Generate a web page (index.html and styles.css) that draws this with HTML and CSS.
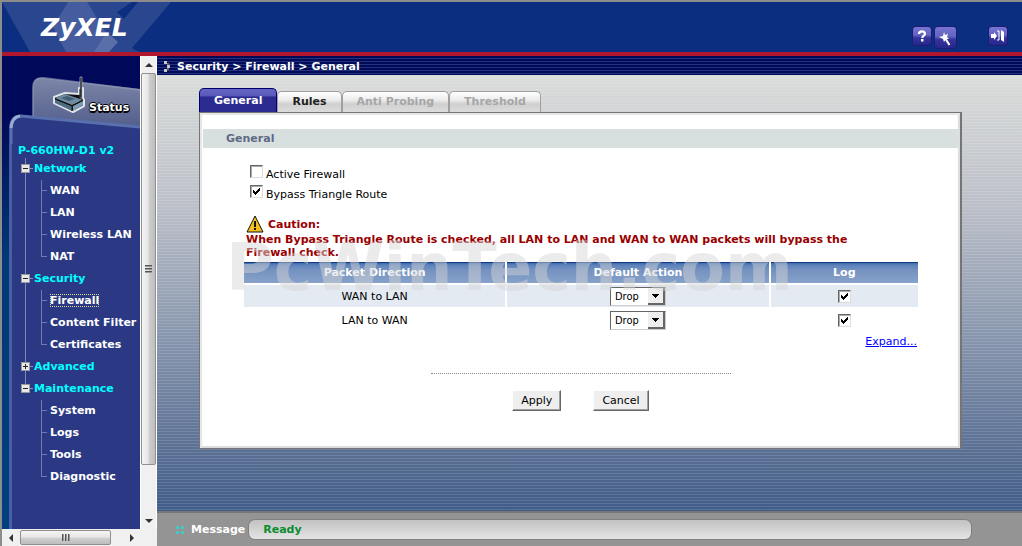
FILE: index.html
```html
<!DOCTYPE html>
<html lang="en">
<head>
  <meta charset="UTF-8">
  <meta name="viewport" content="width=device-width, initial-scale=1.0">
  <title>ZyXEL P-660HW-D1 v2</title>
  <link rel="stylesheet" href="styles.css">
</head>
<body>
  <!-- Header -->
  <header>
    <svg class="header-art" width="180" height="50" viewBox="0 0 180 50" aria-hidden="true">
      <path d="M0 0H130L115 10L122 17L136 0H169L130 46L137 50H28Z" fill="#2a468f" />
      <path d="M66 0H85L106 34L92 50H64L51 25Z" fill="#455c9f" />
      <path d="M105 30L116 40L107 50H92Z" fill="#5a6faa" />
    </svg>
    <a class="logo" href="#">ZyXEL</a>
    <div class="header-tools">
      <button class="tool" aria-label="Help">
        <svg width="18" height="18" viewBox="0 0 18 18"><path d="M6 7C6 3.600 12 3.600 12 6.800C12 8.800 9.300 8.700 9.300 11" fill="none" stroke="#fff" stroke-width="2.200" /><path d="M8 12H10.500V14.500H8Z" fill="#fff" /></svg>
      </button>
      <button class="tool tool-large" aria-label="Wizard">
        <svg width="21" height="21" viewBox="0 0 21 21"><path d="M9 5L10 8L13 7L12 10L14 12L11 12L9 15L8 12L4 10L8 9Z" fill="#fff" /><path d="M10 11L14.500 18" stroke="#fff" stroke-width="2" /></svg>
      </button>
      <button class="tool tool-exit" aria-label="Logout">
        <svg width="18" height="18" viewBox="0 0 18 18"><path d="M2 7H5V5L8 9L5 13V11H2Z" fill="#fff" /><path d="M8 4H10V13H8" fill="none" stroke="#fff" /><path d="M12 3L15 5V15L12 13Z" fill="#fff" /></svg>
      </button>
    </div>
  </header>

  <div class="frames">
    <!-- Sidebar -->
    <aside>
      <div class="side-row">
        <div class="side-content">
          <div class="side-top">
            <svg width="138" height="88" viewBox="0 0 138 88" aria-hidden="true">
              <defs>
                <linearGradient id="tab" x1="0" y1="0" x2="0" y2="1">
                  <stop offset="0" stop-color="#7c86a8" />
                  <stop offset="1" stop-color="#505b8a" />
                </linearGradient>
              </defs>
              <path d="M31 62V31Q31 20 42 22L138 33V75H31Z" fill="url(#tab)" />
              <path d="M31 60V32Q31 21 42 22L138 34" fill="none" stroke="#8f98b2" stroke-width="2" opacity=".6" />
              <path d="M7 88V69Q9 59 18 59L138 70V88Z" fill="#2b3984" />
              <path d="M9 88V70Q10 60 19 60L138 71" fill="none" stroke="#5870ad" stroke-width="3" />
              <path d="M9 72Q10 61 18 60" fill="none" stroke="#9aadd2" stroke-width="3" />
              <!-- router -->
              <path d="M52 41L63 37L77 38V32H81V42L82 44V50L71 56L52 47Z" fill="#111" stroke="#dfe5ea" stroke-width="2" stroke-linejoin="round" />
              <path d="M78 42V21H80V42Z" fill="#111" stroke="#b8c0cc" stroke-width=".7" />
              <path d="M53 42L63 38L81 44L70 49Z" fill="#6e8ba0" />
              <path d="M53 43L70 50V55L53 47Z" fill="#4f6d83" />
              <path d="M71 50L81 45V49L71 55Z" fill="#7d9db2" />
              <path d="M59 42L65 40L73 43L67 45Z" fill="#435e72" />
              <path d="M53 43L70 50L81 44M70 50V55M78 42V33" fill="none" stroke="#111" />
            </svg>
            <a class="status-link" href="#">Status</a>
          </div>
          <nav>
            <div class="model">P-660HW-D1 v2</div>
            <ul class="tree">
              <li class="group">
                <button class="toggle" aria-label="Collapse Network"></button><a href="#">Network</a>
                <ul>
                  <li><a href="#">WAN</a></li>
                  <li><a href="#">LAN</a></li>
                  <li><a href="#">Wireless LAN</a></li>
                  <li><a href="#">NAT</a></li>
                </ul>
              </li>
              <li class="group">
                <button class="toggle" aria-label="Collapse Security"></button><a href="#">Security</a>
                <ul>
                  <li><a class="current" href="#">Firewall</a></li>
                  <li><a href="#">Content Filter</a></li>
                  <li><a href="#">Certificates</a></li>
                </ul>
              </li>
              <li class="group">
                <button class="toggle closed" aria-label="Expand Advanced"></button><a href="#">Advanced</a>
              </li>
              <li class="group">
                <button class="toggle" aria-label="Collapse Maintenance"></button><a href="#">Maintenance</a>
                <ul>
                  <li><a href="#">System</a></li>
                  <li><a href="#">Logs</a></li>
                  <li><a href="#">Tools</a></li>
                  <li><a href="#">Diagnostic</a></li>
                </ul>
              </li>
            </ul>
          </nav>
        </div>
        <div class="scroll-v">
          <span class="arrow up"></span>
          <span class="thumb"><i></i></span>
          <span class="arrow down"></span>
        </div>
      </div>
      <div class="scroll-h">
        <span class="arrow left"></span>
        <span class="thumb"><i></i></span>
        <span class="arrow right"></span>
      </div>
    </aside>

    <!-- Main frame -->
    <div class="main">
      <div class="breadcrumb">
        <svg width="7" height="11" viewBox="0 0 7 11" aria-hidden="true"><path d="M0 0H3V3H0ZM3 4H6V7H3ZM0 8H3V11H0Z" fill="#c8c8c8" /><path d="M3 2H5V4H3ZM3 7H5V9H3Z" fill="#667" /></svg>
        Security &gt; Firewall &gt; General
      </div>

      <main>
        <div class="tabs">
          <button class="tab active">General</button>
          <button class="tab">Rules</button>
          <button class="tab" disabled>Anti Probing</button>
          <button class="tab" disabled>Threshold</button>
        </div>

        <form class="panel" onsubmit="return false;">
          <h2>General</h2>

          <div class="fields">
            <div class="check-row">
              <input type="checkbox" id="active">
              <label for="active">Active Firewall</label>
            </div>
            <div class="check-row">
              <input type="checkbox" id="bypass" checked>
              <label for="bypass">Bypass Triangle Route</label>
            </div>

            <div class="caution">
              <div class="caution-title">
                <svg width="18" height="18" viewBox="0 0 18 18" aria-hidden="true"><path d="M9 1L17 17H1Z" fill="#f1c01c" stroke="#111" stroke-linejoin="round" /><path d="M8 6H10V12H8ZM8 13H10V15H8Z" fill="#111" /></svg>
                Caution:
              </div>
              <p>When Bypass Triangle Route is checked, all LAN to LAN and WAN to WAN packets will bypass the Firewall check.</p>
            </div>

            <div class="rules">
              <table>
                <thead>
                  <tr><th class="wide">Packet Direction</th><th class="wide">Default Action</th><th>Log</th></tr>
                </thead>
                <tbody>
                  <tr>
                    <td>WAN to LAN</td>
                    <td><select aria-label="WAN to LAN action"><option>Drop</option><option>Permit</option></select></td>
                    <td><input type="checkbox" aria-label="Log WAN to LAN" checked></td>
                  </tr>
                  <tr>
                    <td>LAN to WAN</td>
                    <td><select aria-label="LAN to WAN action"><option>Drop</option><option>Permit</option></select></td>
                    <td><input type="checkbox" aria-label="Log LAN to WAN" checked></td>
                  </tr>
                </tbody>
              </table>
              <div class="watermark">PcWinTech.com</div>
            </div>
            <a class="expand" href="#">Expand...</a>
          </div>

          <hr>
          <div class="buttons">
            <button type="submit">Apply</button>
            <button type="reset">Cancel</button>
          </div>
        </form>
      </main>

      <!-- Message bar -->
      <footer>
        <svg width="9" height="8" viewBox="0 0 9 8" aria-hidden="true"><path d="M0 0H3V3H0ZM5 0H8V3H5ZM0 5H3V8H0ZM5 5H8V8H5Z" fill="#45c8c8" /></svg>
        <span>Message</span>
        <output>Ready</output>
      </footer>
    </div>
  </div>
</body>
</html>
```
FILE: styles.css
```css
/* Global Styles */
* {
  box-sizing: border-box;
}

body {
  margin: 0;
  min-height: 100vh;
  display: flex;
  flex-direction: column;
  border-left: 2px solid #8c8c8c;
  font-family: Verdana, "DejaVu Sans", sans-serif;
  font-size: 11px;
  color: #000;
}

button,
select,
input {
  margin: 0;
  font-family: inherit;
  font-size: inherit;
}

ul {
  margin: 0;
  padding: 0;
  list-style: none;
}

/* Header */
header {
  position: relative;
  display: flex;
  align-items: flex-start;
  height: 56px;
  background: #0b2e80;
  border-top: 2px solid #8c8c8c;
  border-bottom: 4px solid #b0162e;
}

.header-art {
  position: absolute;
  left: 0;
  top: 0;
}

.logo {
  position: relative;
  padding: 11px 0 0 39px;
  color: #fff;
  font-size: 25px;
  line-height: 30px;
  font-weight: bold;
  font-style: italic;
  text-decoration: none;
}

.header-tools {
  display: flex;
  margin-left: auto;
  padding: 25px 15px 0 0;
  gap: 4px;
}

.tool {
  width: 18px;
  height: 18px;
  padding: 0;
  border: 0;
  border-radius: 3px;
  background: linear-gradient(#7676d2, #6363c0 45%, #34349c 60%, #26268a);
  box-shadow: 0 0 0 1px #1c1c78;
}

.tool svg {
  display: block;
}

.tool-large {
  width: 21px;
  height: 21px;
}

.tool-exit {
  margin-left: 29px;
}

/* Frames */
.frames {
  flex: 1;
  display: flex;
}

aside {
  width: 155px;
  flex-shrink: 0;
  display: flex;
  flex-direction: column;
  background: #f0f0f0;
}

.side-row {
  flex: 1;
  display: flex;
}

.side-content {
  flex: 1;
  min-width: 0;
  display: flex;
  flex-direction: column;
  overflow: hidden;
  background: linear-gradient(#00085a, #00085a 60px, #003878 200px, #003f80);
}

/* Status tab */
.side-top {
  position: relative;
  height: 88px;
}

.side-top svg {
  display: block;
}

.status-link {
  position: absolute;
  left: 87px;
  top: 44px;
  color: #fff;
  font-size: 11px;
  line-height: 15px;
  font-weight: bold;
  text-decoration: none;
  text-shadow: 1px 1px #000, -1px 0 #000, 1px 0 #000, 0 -1px #000, 0 2px #000;
}

/* Menu tree */
nav {
  flex: 1;
  margin-left: 7px;
  padding-left: 9px;
  border-left: 3px solid #4a5fa2;
  background: #2b3984;
  font-weight: bold;
  white-space: nowrap;
}

nav a {
  color: #fff;
  text-decoration: none;
}

.model {
  margin-left: -3px;
  line-height: 14px;
  color: #0ff;
}

.group {
  position: relative;
  padding-left: 13px;
  line-height: 22px;
}

.group > a {
  color: #0ff;
}

/* vertical line joining the groups */
.group::before {
  content: "";
  position: absolute;
  left: 4px;
  top: 0;
  bottom: 0;
  border-left: 1px solid #7c87b8;
}

.group:last-child::before {
  bottom: auto;
  height: 11px;
}

.group::after {
  content: "";
  position: absolute;
  left: 9px;
  top: 10px;
  width: 3px;
  border-top: 1px solid #8a94bf;
}

.toggle {
  position: absolute;
  z-index: 1;
  left: 0;
  top: 6px;
  width: 9px;
  height: 9px;
  padding: 0;
  border: 1px solid #999;
  background: linear-gradient(#222, #222) center / 5px 1px no-repeat, #e8e8e8;
}

.toggle.closed {
  background: linear-gradient(#222, #222) center / 5px 1px no-repeat, linear-gradient(#222, #222) center / 1px 5px no-repeat, #e8e8e8;
}

.group li {
  position: relative;
  padding-left: 16px;
}

.group li::before {
  content: "";
  position: absolute;
  left: 7px;
  top: 0;
  bottom: 0;
  border-left: 1px solid #6f7bb0;
}

.group li:last-child::before {
  bottom: auto;
  height: 11px;
}

.group li::after {
  content: "";
  position: absolute;
  left: 7px;
  top: 10px;
  width: 6px;
  border-top: 1px solid #6f7bb0;
}

nav .current {
  outline: 1px dotted #e0d890;
  outline-offset: -1px;
}

/* Scroll bars */
.scroll-v {
  width: 17px;
  display: flex;
  flex-direction: column;
  align-items: center;
  background: #f0f0f0;
  border-left: 1px solid #fff;
  border-right: 1px solid #fff;
}

.scroll-h {
  height: 17px;
  display: flex;
  align-items: center;
  background: #f0f0f0;
}

.arrow {
  width: 17px;
  height: 17px;
  flex-shrink: 0;
  display: flex;
  align-items: center;
  justify-content: center;
}

.arrow::before {
  content: "";
  border: 4px solid transparent;
}

.up::before {
  border-top-width: 0;
  border-bottom-color: #333;
}

.down::before {
  border-bottom-width: 0;
  border-top-color: #333;
}

.left::before {
  border-left-width: 0;
  border-right-color: #333;
}

.right::before {
  border-right-width: 0;
  border-left-color: #333;
}

.thumb {
  display: flex;
  align-items: center;
  justify-content: center;
  border: 1px solid #8f8f8f;
  border-radius: 2px;
}

.scroll-v .thumb {
  width: 15px;
  flex: 1;
  margin-bottom: 47px;
  background: linear-gradient(to right, #f5f5f5, #e6e6e6 48%, #cfcfcf 55%, #bdbdbd);
}

.scroll-v i {
  width: 7px;
  height: 8px;
  background: repeating-linear-gradient(#555 0 1px, #999 1px 2px, transparent 2px 3px);
}

.scroll-h .thumb {
  height: 15px;
  width: 91px;
  margin: 0 12px 0 1px;
  background: linear-gradient(#f5f5f5, #e6e6e6 48%, #cfcfcf 55%, #bdbdbd);
}

.scroll-h i {
  width: 8px;
  height: 7px;
  background: repeating-linear-gradient(to right, #555 0 1px, #999 1px 2px, transparent 2px 3px);
}

/* Main frame */
.main {
  flex: 1;
  min-width: 0;
  display: flex;
  flex-direction: column;
}

.breadcrumb {
  height: 19px;
  display: flex;
  align-items: center;
  gap: 6px;
  padding: 2px 0 0 7px;
  color: #fff;
  font-weight: bold;
  background: repeating-linear-gradient(#000a58 0 2px, #22347c 2px 3px);
}

main {
  flex: 1;
  padding: 13px 60px 0 42px;
  background: repeating-linear-gradient(transparent 0 2px, rgba(255, 255, 255, 0.13) 2px 3px), linear-gradient(#dadcda, #bbbfc8 30%, #8493ab 62%, #5c7195 85%, #405b87);
}

/* Tabs */
.tabs {
  display: flex;
  align-items: flex-end;
  height: 24px;
}

.tab {
  height: 21px;
  padding: 0 14px 1px;
  border: 1px solid #a0a0a0;
  border-width: 1px 1px 0;
  border-radius: 5px 5px 0 0;
  background: linear-gradient(#fff, #ececec 40%, #d0d0d0 60%, #dcdcdc);
  color: #222;
  font-weight: bold;
}

.tab:disabled {
  color: #a6a6a6;
}

.tab.active {
  height: 24px;
  color: #fff;
  border-color: #00006c;
  background: linear-gradient(#6666c4, #5a5ab8 28%, #2b2b92 36%, #2b2b92);
}

/* Panel */
.panel {
  min-height: 337px;
  padding: 16px 2px 36px 3px;
  background: #fff;
  border: 1px solid #757575;
  border-right-width: 2px;
  box-shadow: inset 2px 2px 1px #e6e6e6, inset -2px -2px 1px #dcdcdc;
}

.panel h2 {
  margin: 0;
  padding: 1px 0 0 23px;
  font-size: 11px;
  line-height: 18px;
  color: #5f6a85;
  background: #d7e0de;
}

.fields {
  padding: 17px 40px 0 41px;
  display: flex;
  flex-direction: column;
}

input[type="checkbox"] {
  appearance: none;
  width: 13px;
  height: 13px;
  border: 1px solid;
  border-color: #666 #ddd #ddd #666;
  background: #fff;
  box-shadow: inset 1px 1px #aaa;
}

input[type="checkbox"]:checked {
  background: #fff url("data:image/svg+xml,%3Csvg xmlns='http://www.w3.org/2000/svg' width='7' height='7' shape-rendering='crispEdges'%3E%3Cpath d='M0 2h1v1h1v1h1v-1h1v-1h1v-1h1v-1h1v3h-1v1h-1v1h-1v1h-1v1h-1v-1h-1v-1h-1z'/%3E%3C/svg%3E") center / 7px 7px no-repeat;
}

.check-row {
  display: flex;
  align-items: flex-start;
  height: 20px;
  gap: 3px;
  padding-left: 6px;
}

.check-row label {
  padding-top: 3px;
  line-height: 14px;
}

.caution {
  padding: 10px 32px 0 2px;
  color: #900;
  font-weight: bold;
}

.caution-title {
  display: flex;
  align-items: center;
  gap: 4px;
}

.caution p {
  margin: 0;
  line-height: 13px;
}

/* Rules table */
.rules {
  position: relative;
  margin: 1px -2px 0;
}

table {
  width: 100%;
  table-layout: fixed;
  border-spacing: 2px;
}

th {
  height: 21px;
  padding: 0;
  color: #fff;
  background: linear-gradient(#123a80 0 1px, #3d68ac 1px, #5c82bb 3px, #7592c0 8px, #86a2ca);
}

.wide {
  width: 39%;
}

td {
  height: 22px;
  padding: 0;
  text-align: center;
}

td input,
td select {
  vertical-align: middle;
}

tbody tr:first-child td {
  background: #e3eaf2;
}

select {
  appearance: none;
  width: 56px;
  height: 19px;
  padding: 0 4px;
  border: 1px solid;
  border-color: #666 #ccc #ccc #666;
  border-radius: 0;
  color: #000;
  font-family: Tahoma, "DejaVu Sans Condensed", "DejaVu Sans", sans-serif;
  background: #fff url("data:image/svg+xml,%3Csvg xmlns='http://www.w3.org/2000/svg' width='17' height='17' shape-rendering='crispEdges'%3E%3Cpath fill='%23eee' d='M0 0h17v17H0z'/%3E%3Cpath fill='%23666' d='M15 0h2v17H0v-2h15z'/%3E%3Cpath d='M4 6h7v1h-1v1H9v1H8v1H7V9H6V8H5V7H4z'/%3E%3C/svg%3E") right top no-repeat;
}

.watermark {
  position: absolute;
  left: -16px;
  top: -29px;
  color: rgba(213, 213, 213, 0.48);
  font-size: 65px;
  line-height: 74px;
  font-weight: bold;
  pointer-events: none;
}

.expand {
  align-self: flex-end;
  line-height: 17px;
  margin-right: 1px;
  color: #00f;
}

/* Form buttons */
hr {
  width: 300px;
  margin: 23px auto 16px;
  border: 0;
  border-top: 1px dotted #888;
}

.buttons {
  display: flex;
  justify-content: center;
  gap: 32px;
}

.buttons button {
  height: 21px;
  padding: 0 8px;
  border: 1px solid;
  border-color: #fff #666 #666 #fff;
  background: #eee;
  box-shadow: inset -1px -1px #a0a0a0;
}

/* Message bar */
footer {
  display: flex;
  align-items: center;
  height: 35px;
  padding: 0 51px 0 19px;
  border-top: 2px solid #777;
  background: #949494;
  color: #fff;
  font-weight: bold;
}

footer span {
  margin: 0 4px 0 6px;
}

output {
  flex: 1;
  padding-left: 14px;
  line-height: 19px;
  border-radius: 6px;
  color: #0a8c32;
  background: linear-gradient(#c2c2c2, #e4e4e4);
  box-shadow: 0 0 0 1px #808080;
}
```
